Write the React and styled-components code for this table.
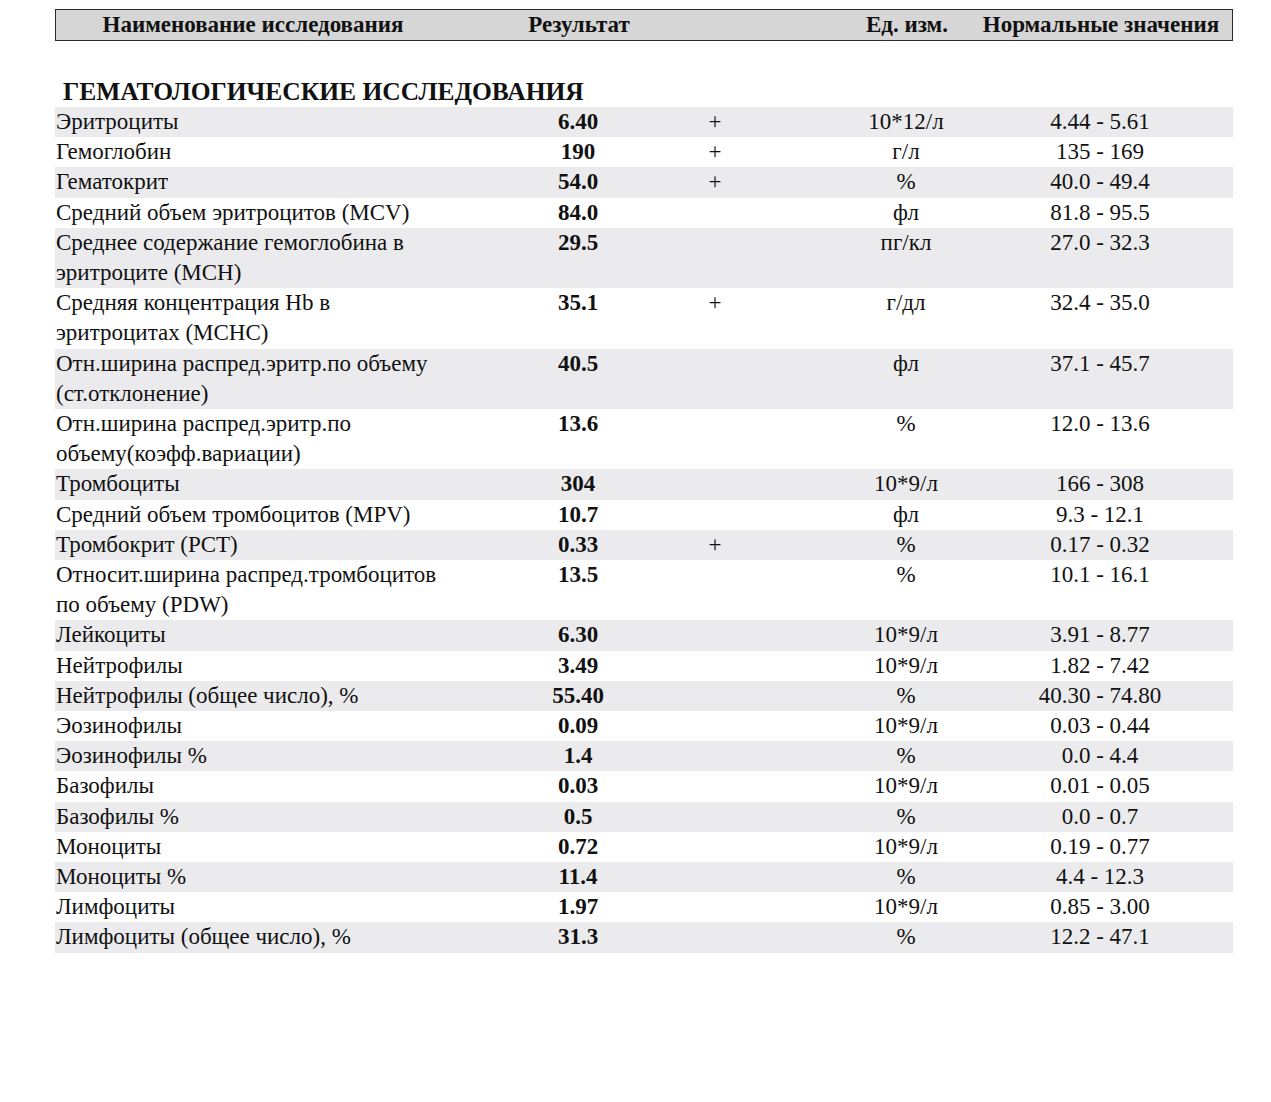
import React from 'react';
import styled, { createGlobalStyle } from 'styled-components';

const GlobalStyle = createGlobalStyle`
  body {
    margin: 0;
    background: #fff;
    font-family: "Liberation Serif", "Times New Roman", serif;
    color: #111;
  }
`;

const COLS = '443px 160px 114px 268px 120px 1fr';

const Page = styled.div`
  padding: 9px 38px 0 55px;
  width: 1178px;
`;

const Header = styled.div`
  display: grid;
  grid-template-columns: ${COLS};
  height: 32px;
  align-items: center;
  background: #d6d6d6;
  border: 1.5px solid #2a2a2a;
  box-sizing: border-box;
  font-weight: bold;
  font-size: 23px;
`;

const HeadCell = styled.div`
  display: flex;
  justify-content: center;
  white-space: nowrap;
  padding-right: ${({ shift }) => (shift ? `${shift}px` : 0)};
`;

const Section = styled.h2`
  margin: 36px 0 0 8px;
  font-size: 25.5px;
  line-height: 30px;
  font-weight: bold;
`;

const Row = styled.div`
  display: grid;
  grid-template-columns: ${COLS};
  align-items: start;
  background: ${({ shaded }) => (shaded ? '#ebebed' : '#fff')};
  font-size: 23px;
  line-height: 30.2px;
`;

const Name = styled.div`
  padding-left: 1px;
`;

const Cell = styled.div`
  display: flex;
  justify-content: center;
  white-space: nowrap;
  font-weight: ${({ bold }) => (bold ? 'bold' : 'normal')};
`;

const rows = [
  ['Эритроциты', '6.40', '+', '10*12/л', '4.44 - 5.61'],
  ['Гемоглобин', '190', '+', 'г/л', '135 - 169'],
  ['Гематокрит', '54.0', '+', '%', '40.0 - 49.4'],
  ['Средний объем эритроцитов (MCV)', '84.0', '', 'фл', '81.8 - 95.5'],
  [['Среднее содержание гемоглобина в', 'эритроците (MCH)'], '29.5', '', 'пг/кл', '27.0 - 32.3'],
  [['Средняя концентрация Hb в', 'эритроцитах (MCHC)'], '35.1', '+', 'г/дл', '32.4 - 35.0'],
  [['Отн.ширина распред.эритр.по объему', '(ст.отклонение)'], '40.5', '', 'фл', '37.1 - 45.7'],
  [['Отн.ширина распред.эритр.по', 'объему(коэфф.вариации)'], '13.6', '', '%', '12.0 - 13.6'],
  ['Тромбоциты', '304', '', '10*9/л', '166 - 308'],
  ['Средний объем тромбоцитов (MPV)', '10.7', '', 'фл', '9.3 - 12.1'],
  ['Тромбокрит (PCT)', '0.33', '+', '%', '0.17 - 0.32'],
  [['Относит.ширина распред.тромбоцитов', 'по объему (PDW)'], '13.5', '', '%', '10.1 - 16.1'],
  ['Лейкоциты', '6.30', '', '10*9/л', '3.91 - 8.77'],
  ['Нейтрофилы', '3.49', '', '10*9/л', '1.82 - 7.42'],
  ['Нейтрофилы (общее число), %', '55.40', '', '%', '40.30 - 74.80'],
  ['Эозинофилы', '0.09', '', '10*9/л', '0.03 - 0.44'],
  ['Эозинофилы %', '1.4', '', '%', '0.0 - 4.4'],
  ['Базофилы', '0.03', '', '10*9/л', '0.01 - 0.05'],
  ['Базофилы %', '0.5', '', '%', '0.0 - 0.7'],
  ['Моноциты', '0.72', '', '10*9/л', '0.19 - 0.77'],
  ['Моноциты %', '11.4', '', '%', '4.4 - 12.3'],
  ['Лимфоциты', '1.97', '', '10*9/л', '0.85 - 3.00'],
  ['Лимфоциты (общее число), %', '31.3', '', '%', '12.2 - 47.1'],
];

export default function App() {
  return (
    <Page>
      <GlobalStyle />
      <Header>
        <HeadCell shift={49}>Наименование исследования</HeadCell>
        <HeadCell>Результат</HeadCell>
        <HeadCell />
        <HeadCell>Ед. изм.</HeadCell>
        <HeadCell>Нормальные значения</HeadCell>
        <HeadCell />
      </Header>
      <Section>ГЕМАТОЛОГИЧЕСКИЕ ИССЛЕДОВАНИЯ</Section>
      {rows.map(([name, value, flag, unit, norm], i) => (
        <Row key={i} shaded={i % 2 === 0}>
          <Name>
            {Array.isArray(name)
              ? name.map((line) => <div key={line}>{line}</div>)
              : name}
          </Name>
          <Cell bold>{value}</Cell>
          <Cell>{flag}</Cell>
          <Cell>{unit}</Cell>
          <Cell>{norm}</Cell>
          <div />
        </Row>
      ))}
    </Page>
  );
}
